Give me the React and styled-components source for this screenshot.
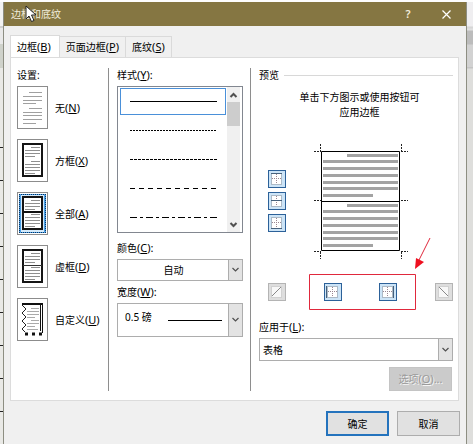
import React, { useState } from "react";
import styled, { createGlobalStyle, css } from "styled-components";

const GlobalStyle = createGlobalStyle`
  *, *::before, *::after { box-sizing: border-box; }
  html, body, #root { height: 100%; }
  body {
    margin: 0;
    overflow: hidden;
    background: #e6e6e3;
    color: #000;
    font: 10px/14px "Noto Sans", "Noto Sans CJK SC", sans-serif;
  }
  button, input, select { font: inherit; color: inherit; margin: 0; padding: 0; }
  svg { display: block; }
`;

const Desktop = styled.div`
  display: grid;
  grid-template-columns: 3px minmax(0, 1fr) 6px;
  min-height: 100%;
  border-top: 2px solid #fdfdfd;
`;

const LeftRuler = styled.div`
  display: flex;
  flex-direction: column;
  justify-content: space-between;
  padding: 145px 0 0;
  background: linear-gradient(#f2f2f2 24px, #cfcfcf 24px 26px, #e9e9e9 26px 42px, #cfd2cb 42px 66px, #e9e9e6 66px);
`;

const Tick = styled.span`
  height: 2px;
  background: linear-gradient(#222 1px, transparent 1px);
`;

const RightEdge = styled.div`
  background: linear-gradient(#efeef0 24px, #d4d4d4 25px, #e2e2e2 28px, #bcbcbc 29px 42px, #d2d2d2 43px 65px, #c4c4c4 65px 66px, #dededc 67px);
`;

const Dialog = styled.section`
  display: flex;
  flex-direction: column;
  background: #f0f0f0;
  border: solid #8d8e82;
  border-width: 0 1px;
`;

const TitleBar = styled.header`
  position: relative;
  display: flex;
  align-items: center;
  height: 24px;
  padding: 0 14px 0 7px;
  background: #857642;
  color: #f2eddc;
`;

const Title = styled.h1`
  flex: 1;
  margin: 0;
  font-size: 10px;
  font-weight: 400;
`;

const TitleButton = styled.button`
  display: grid;
  place-items: center;
  width: 12px;
  height: 20px;
  margin-left: 26px;
  border: 0;
  background: none;
  font-size: 11px;
  font-weight: 600;
`;

const Pointer = styled.svg`
  position: absolute;
  left: 21px;
  top: 3px;
`;

const Tabs = styled.div`
  display: flex;
  align-items: flex-end;
  height: 31px;
  padding: 0 6px;
`;

const Tab = styled.button`
  height: 21px;
  padding: 0 6px 1px;
  border: 1px solid #dadada;
  border-width: 1px 1px 0 0;
  background: #f0f0f0;
  ${(p) => p.$active && css`
    height: 23px;
    margin-bottom: -1px;
    padding: 0 8px 0 6px;
    border-left-width: 1px;
    background: #fff;
  `}
`;

const Key = styled.span`
  font-size: 11px;
`;

const Panel = styled.div`
  display: grid;
  grid-template-columns: 92px 142px minmax(0, 1fr);
  margin: 0 7px 0 6px;
  padding: 10px 5px 9px 6px;
  border: 1px solid #dcdcdc;
  background: #fff;
`;

const Column = styled.div`
  display: flex;
  flex-direction: column;
  min-width: 0;
  min-height: 323px;
  border-right: ${(p) => (p.$last ? "0" : "1px solid #8e8e8e")};
  padding: ${(p) => (p.$last ? "0 0 0 8px" : p.$wide ? "0 7px 0 8px" : "0")};
`;

const Caption = styled.label`
  height: 18px;
  line-height: 14px;
`;

const Settings = styled.div`
  display: flex;
  flex-direction: column;
  gap: 10px;
`;

const Setting = styled.label`
  display: grid;
  grid-template-columns: 31px 1fr;
  align-items: center;
  column-gap: 7px;
  white-space: nowrap;
`;

const SettingRadio = styled.input`
  appearance: none;
  grid-area: 1 / 1;
  width: 31px;
  height: 43px;
  border: 1px solid #8c8c8c;
  background: #fff;
  outline: none;
  &:checked {
    background: #4a9fe6;
    box-shadow: inset 0 0 0 1px #fff;
  }
  &:checked::before {
    content: "";
    display: block;
    height: 39px;
    margin: 1px;
    border: 1px dotted #0a3561;
  }
`;

const SettingIcon = styled.svg`
  grid-area: 1 / 1;
  z-index: 1;
  justify-self: center;
  pointer-events: none;
`;

const ListBox = styled.div`
  display: grid;
  grid-template-columns: 1fr 13px;
  column-gap: 1px;
  padding-right: 2px;
  border: 1px solid #828790;
`;

const StyleOption = styled.button`
  display: flex;
  align-items: center;
  justify-content: center;
  width: 100%;
  height: 29px;
  padding: 0;
  border: 0;
  background: none;
`;

const OptionFrame = styled.span`
  display: grid;
  place-items: center;
  flex: 1;
  height: 27px;
  margin-left: 2px;
  border: 1px solid ${(p) => (p.$active ? "#4a90d9" : "transparent")};
`;

const ScrollBar = styled.div`
  display: flex;
  flex-direction: column;
  background: #f0f0f0;
`;

const ScrollButton = styled.button`
  display: grid;
  place-items: center;
  height: 15px;
  border: 0;
  background: none;
`;

const ScrollThumb = styled.div`
  height: 24px;
  margin-bottom: auto;
  background: #cdcdcd;
`;

const Field = styled.div`
  display: flex;
  flex-direction: column;
  margin-top: ${(p) => p.$gap || 0}px;
`;

const SelectBox = styled.div`
  display: grid;
  grid-template-columns: 1fr 15px;
  height: ${(p) => p.$height}px;
`;

const Select = styled.select`
  appearance: none;
  grid-area: 1 / 1 / 2 / 3;
  width: 100%;
  height: 100%;
  padding: ${(p) => (p.$tall ? "0 16px 6px 7px" : "0 16px 0 3px")};
  border: 1px solid #adadad;
  border-radius: 0;
  background: #fff;
  text-align-last: ${(p) => (p.$center ? "center" : "left")};
`;

const Arrow = styled.span`
  grid-area: 1 / 2;
  display: grid;
  place-items: center;
  border: 1px solid #adadad;
  background: #e3e3e3;
  pointer-events: none;
`;

const WidthSample = styled.span`
  grid-area: 1 / 1;
  align-self: center;
  justify-self: end;
  width: 54px;
  height: 1px;
  margin-right: 6px;
  background: #000;
  pointer-events: none;
`;

const SectionTitle = styled.h2`
  display: flex;
  align-items: center;
  gap: 5px;
  margin: 0;
  font-size: 10px;
  font-weight: 400;
  line-height: 14px;
  &::after {
    content: "";
    flex: 1;
    height: 1px;
    background: #d8d8d8;
  }
`;

const Hint = styled.p`
  margin: 8px 0 0;
  padding-left: 7px;
  line-height: 15px;
  text-align: center;
`;

const PreviewArea = styled.div`
  display: grid;
  grid-template-columns: 18px 1fr 18px;
  align-items: center;
  margin: 24px 0 0 9px;
`;

const SideButtons = styled.div`
  display: flex;
  flex-direction: column;
  gap: 4px;
  padding-bottom: 2px;
`;

const Diagram = styled.svg`
  justify-self: center;
`;

const EdgeButton = styled.button`
  display: grid;
  place-items: center;
  width: 18px;
  height: 18px;
  border: 1px solid ${(p) => (p.disabled ? "#b4b4b4" : "#2c6199")};
  background: ${(p) => (p.disabled ? "#dedede" : "#cce4f7")};
`;

const BottomButtons = styled.div`
  position: relative;
  display: flex;
  justify-content: space-between;
  margin: 24px 0 0 9px;
`;

const Annotation = styled.svg`
  position: absolute;
  left: 41px;
  top: -46px;
  pointer-events: none;
`;

const PushButton = styled.button`
  width: 63px;
  height: 25px;
  border: ${(p) => (p.$primary ? "2px solid #2473bd" : "1px solid #adadad")};
  background: #e1e1e1;
  &:disabled {
    align-self: flex-end;
    height: 24px;
    margin: 6px 1px 0 0;
    border-color: #c4c4c4;
    background: #cbcbcb;
    color: #9b9b9b;
    text-shadow: 1px 1px 0 #f4f4f4;
  }
`;

const Footer = styled.footer`
  display: flex;
  justify-content: flex-end;
  gap: 8px;
  padding: 10px 6px;
`;

const Label = ({ text, k, tail = "" }) => (
  <>{text}<Key>(<u>{k}</u>){tail}</Key></>
);

const Chevron = ({ up, color = "#505050" }) => (
  <svg width="9" height="6" viewBox="0 0 9 6" fill="none" stroke={color} strokeWidth={up === undefined ? 1.2 : 2}>
    <path d={up ? "M1.5 5 4.5 2 7.5 5" : "M1.5 1 4.5 4 7.5 1"} />
  </svg>
);

const pageLines = [
  [11, 20, 4], [5, 20, 7], [5, 20, 10], [5, 15, 13],
  [11, 20, 18], [5, 20, 21], [5, 20, 24], [5, 20, 27], [5, 15, 30],
];

function PageIcon({ kind }) {
  if (kind === "none") {
    return (
      <SettingIcon width="25" height="39" stroke="#a0a0a0">
        <path strokeWidth="1" d="M9 4.5h13M3 8.5h19M3 12.5h19M3 15.5h13M9 20.5h13M3 24.5h19M3 27.5h19M3 31.5h19M3 35.5h13" />
      </SettingIcon>
    );
  }
  if (kind === "custom") {
    return (
      <SettingIcon width="25" height="39" fill="none">
        <path d="M20.5 5v26" stroke="#111" />
        <path d="M2 4h21" stroke="#111" strokeWidth="2" />
        <path d="m2 5 4 4-4 4 4 4-4 4 4 4-4 4 3 3" stroke="#222" />
        <path d="M22.5 4v29" stroke="#111" />
        <path d="M11 8.5h8M7 11.5h12M7 14.5h12M7 17.5h8M11 20.5h8M7 23.5h12M7 26.5h8M7 29.5h11" stroke="#aaa" />
        <path d="M5 34h3M12 34h3M19 34h3" stroke="#111" strokeWidth="3" />
      </SettingIcon>
    );
  }
  return (
    <SettingIcon width="25" height="39" viewBox="0 -2 25 39">
      {kind === "all" && <rect x="1" y="-1" width="23" height="37" fill="#d5eafa" />}
      <rect x="3" y="1" width="19" height="32" fill="#fff" stroke="#151515" strokeWidth="2" />
      {pageLines.map(([a, b, y]) => (
        <path key={y} d={`M${a} ${y}.5H${b}`} stroke="#8f8f8f" />
      ))}
      {kind === "all" && <path d="M3 16h19" stroke="#111" strokeWidth="2" />}
      {kind === "grid" && <path d="M3 16.5h19" stroke="#333" />}
    </SettingIcon>
  );
}

const edgePaths = {
  top: "M2 2.5h11",
  middle: "M2 7.5h11",
  bottom: "M2 13.5h11",
  left: "M1.5 2v12",
  right: "M13.5 2v12",
  rise: "M3 12 12 3",
  fall: "M3 3l9 9",
};

function Edge({ kind, name }) {
  const diagonal = kind === "rise" || kind === "fall";
  return (
    <EdgeButton aria-label={name} disabled={diagonal}>
      <svg width="16" height="16" fill="none">
        <path d="M2 2h11v12H2z" fill={diagonal ? "#f8f8f8" : "#fff"} />
        <path d="M2.5 2.5h10v11h-10z" stroke={diagonal ? "#aaa" : "#58748f"} strokeDasharray="1 1" />
        {!diagonal && <path d="M7.5 3v10M3 7.5h10" stroke="#9a8792" strokeDasharray="1 1" />}
        <path d={edgePaths[kind]} stroke={diagonal ? "#888" : "#46617c"} />
      </svg>
    </EdgeButton>
  );
}

const settings = [
  ["none", "无", "N"], ["box", "方框", "X"], ["all", "全部", "A"],
  ["grid", "虚框", "D"], ["custom", "自定义", "U"],
];

const lineStyles = [
  ["实线", ""], ["点线", "2 1"], ["短划线", "3 1"], ["虚线", "5 4"], ["点划线", "7 3 3 3"],
];

const previewBars = [0, 50].flatMap((o) => [
  [33, 51, 10 + o], [9, 75, 16 + o], [9, 75, 23 + o], [9, 75, 30 + o],
  [9, 75, 37 + o], [9, 75, 43 + o], [9, 50, 50 + o],
]);

export default function App() {
  const [setting, setSetting] = useState("all");
  const [line, setLine] = useState(0);

  return (
    <>
      <GlobalStyle />
      <Desktop lang="zh-CN">
        <LeftRuler>
          {Array.from({ length: 10 }, (_, i) => <Tick key={i} />)}
        </LeftRuler>
        <Dialog role="dialog" aria-labelledby="title">
          <TitleBar>
            <Title id="title">边框和底纹</Title>
            <TitleButton aria-label="帮助">?</TitleButton>
            <TitleButton aria-label="关闭">
              <svg width="9" height="9" stroke="#fff" strokeWidth="1.2"><path d="m.5.5 8 8m0-8-8 8" /></svg>
            </TitleButton>
            <Pointer width="12" height="18">
              <path d="M1 1v13l3-3 2.5 5.5 2.5-1L6.5 10H11z" fill="#fff" stroke="#222" />
            </Pointer>
          </TitleBar>

          <Tabs role="tablist">
            <Tab role="tab" aria-selected="true" $active><Label text="边框" k="B" /></Tab>
            <Tab role="tab" aria-selected="false"><Label text="页面边框" k="P" /></Tab>
            <Tab role="tab" aria-selected="false"><Label text="底纹" k="S" /></Tab>
          </Tabs>

          <Panel role="tabpanel">
            <Column>
              <Caption as="div" id="settings">设置:</Caption>
              <Settings role="radiogroup" aria-labelledby="settings">
                {settings.map(([id, text, k]) => (
                  <Setting key={id}>
                    <SettingRadio type="radio" name="setting" checked={setting === id} onChange={() => setSetting(id)} />
                    <PageIcon kind={id} />
                    <span><Label text={text} k={k} /></span>
                  </Setting>
                ))}
              </Settings>
            </Column>

            <Column $wide>
              <Caption as="div" id="styles"><Label text="样式" k="Y" tail=":" /></Caption>
              <ListBox>
                <div role="listbox" aria-labelledby="styles">
                  {lineStyles.map(([name, dash], i) => (
                    <StyleOption key={name} role="option" aria-label={name} aria-selected={line === i} onClick={() => setLine(i)}>
                      <OptionFrame $active={line === i}>
                        <svg width="87" height="1"><path d="M0 .5h87" stroke="#000" strokeDasharray={dash} /></svg>
                      </OptionFrame>
                    </StyleOption>
                  ))}
                </div>
                <ScrollBar>
                  <ScrollButton aria-label="向上滚动"><Chevron up /></ScrollButton>
                  <ScrollThumb />
                  <ScrollButton aria-label="向下滚动"><Chevron up={false} /></ScrollButton>
                </ScrollBar>
              </ListBox>
              <Field $gap={8}>
                <Caption htmlFor="color"><Label text="颜色" k="C" tail=":" /></Caption>
                <SelectBox $height={22}>
                  <Select id="color" $center><option>自动</option></Select>
                  <Arrow><Chevron /></Arrow>
                </SelectBox>
              </Field>
              <Field $gap={4}>
                <Caption htmlFor="width"><Label text="宽度" k="W" tail=":" /></Caption>
                <SelectBox $height={34}>
                  <Select id="width" $tall><option>0.5 磅</option></Select>
                  <WidthSample />
                  <Arrow><Chevron /></Arrow>
                </SelectBox>
              </Field>
            </Column>

            <Column $last>
              <SectionTitle>预览</SectionTitle>
              <Hint>单击下方图示或使用按钮可<br />应用边框</Hint>
              <PreviewArea>
                <SideButtons>
                  <Edge kind="top" name="上框线" />
                  <Edge kind="middle" name="内部横框线" />
                  <Edge kind="bottom" name="下框线" />
                </SideButtons>
                <Diagram width="94" height="115" fill="none">
                  <path d="M6.5 0v7M87.5 0v7M6.5 108v7M87.5 108v7M0 7.5h7M87 7.5h7M0 56.5h7M87 56.5h7M0 107.5h7M87 107.5h7" stroke="#222" strokeDasharray="2 1" />
                  {previewBars.map(([x, w, y]) => (
                    <rect key={y} x={x} y={y} width={w} height="3" fill="#a3a3a3" />
                  ))}
                  <path d="M7.5 7.5h78v99h-78zM7 57.5h79" stroke="#000" />
                </Diagram>
              </PreviewArea>
              <BottomButtons>
                <Edge kind="rise" name="斜上框线" />
                <Edge kind="left" name="左框线" />
                <Edge kind="right" name="右框线" />
                <Edge kind="fall" name="斜下框线" />
                <Annotation width="124" height="74" fill="none">
                  <path d="M.5 37.5h106v35H.5zM121 1l-11 22" stroke="#e0283c" />
                  <path d="m106 32 1-11 8 4z" fill="#ee1020" />
                </Annotation>
              </BottomButtons>
              <Field $gap={19}>
                <Caption htmlFor="apply"><Label text="应用于" k="L" tail=":" /></Caption>
                <SelectBox $height={23}>
                  <Select id="apply"><option>表格</option></Select>
                  <Arrow><Chevron /></Arrow>
                </SelectBox>
              </Field>
              <PushButton disabled><Label text="选项" k="O" tail="..." /></PushButton>
            </Column>
          </Panel>

          <Footer>
            <PushButton $primary>确定</PushButton>
            <PushButton>取消</PushButton>
          </Footer>
        </Dialog>
        <RightEdge />
      </Desktop>
    </>
  );
}
